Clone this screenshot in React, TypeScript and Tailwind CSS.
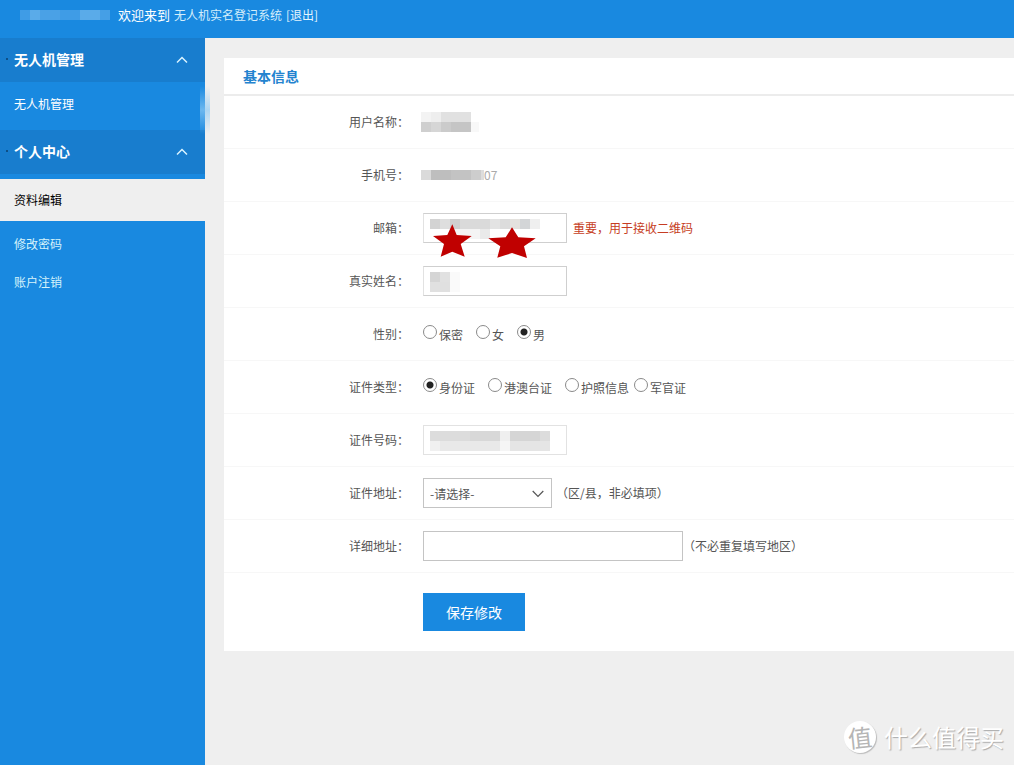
import { useState } from "react";
import type { ReactNode } from "react";

type Block = [x: number, y: number, w: number, h: number, fill: string];

function Mosaic({ width, height, blocks, className = "" }: { width: number; height: number; blocks: Block[]; className?: string }) {
  return (
    <svg width={width} height={height} className={`shrink-0 ${className}`} aria-hidden="true" shapeRendering="crispEdges">
      {blocks.map(([x, y, w, h, fill], i) => (
        <rect key={i} x={x} y={y} width={w} height={h} fill={fill} />
      ))}
    </svg>
  );
}

const accountMask: Block[] = [
  [0, 0, 90, 10, "#3f9ce6"],
  [10, 0, 10, 10, "#5aabe9"],
  [20, 0, 20, 10, "#4aa1e6"],
  [60, 0, 20, 10, "#5aabe9"],
  [80, 0, 10, 10, "#459fe6"],
];
const nameMask: Block[] = [
  [0, 0, 10, 10, "#f3f3f3"],
  [10, 0, 10, 10, "#eeeeee"],
  [20, 0, 30, 10, "#e1e1e1"],
  [0, 10, 10, 10, "#cfcfcf"],
  [10, 10, 10, 10, "#d6d6d6"],
  [20, 10, 10, 10, "#cbcbcb"],
  [30, 10, 20, 10, "#c5c5c5"],
  [50, 10, 8, 10, "#f8f8f8"],
];
const phoneMask: Block[] = [
  [0, 0, 10, 10, "#dadada"],
  [10, 0, 20, 10, "#bebebe"],
  [30, 0, 20, 10, "#c3c3c3"],
  [50, 0, 10, 10, "#cdcdcd"],
  [60, 0, 3, 10, "#dddddd"],
];
const emailMask: Block[] = [
  [0, 0, 10, 10, "#d3d3d3"],
  [10, 0, 10, 10, "#dedede"],
  [20, 0, 10, 10, "#cfcfcf"],
  [30, 0, 30, 10, "#dadada"],
  [60, 0, 10, 10, "#e3e3e3"],
  [70, 0, 10, 10, "#dcdcdc"],
  [80, 0, 10, 10, "#e4e2de"],
  [90, 0, 10, 10, "#d3d5d7"],
  [100, 0, 10, 10, "#efefef"],
  [20, 10, 30, 10, "#f4f4f4"],
  [50, 10, 10, 10, "#eaeaea"],
];
const realNameMask: Block[] = [
  [0, 0, 10, 10, "#d5d5d5"],
  [10, 0, 10, 10, "#e1e1e1"],
  [0, 10, 20, 10, "#e0e0e0"],
  [20, 0, 10, 20, "#fafafa"],
];
const idMask: Block[] = [
  [0, 0, 40, 10, "#dcdcdc"],
  [40, 0, 30, 10, "#d8d8d8"],
  [70, 0, 10, 10, "#efefef"],
  [80, 0, 30, 10, "#d5d5d5"],
  [110, 0, 10, 10, "#dcdcdc"],
  [0, 10, 10, 10, "#f0f0f0"],
  [10, 10, 60, 10, "#e9e9e9"],
  [70, 10, 10, 10, "#f5f5f5"],
  [80, 10, 40, 10, "#e5e5e5"],
];

function GroupButton({ children, open, onClick }: { children: ReactNode; open: boolean; onClick: () => void }) {
  return (
    <button type="button" aria-expanded={open} onClick={onClick} className="flex h-11 w-full items-center justify-between bg-[#187dce] pr-[17px] pl-1.5 text-sm font-bold">
      <span className="flex items-center gap-1.5 pb-0.5">
        <span className="size-0.5 bg-[#0d4f86]" />
        {children}
      </span>
      <svg width="12" height="8" viewBox="0 0 12 8" fill="none" stroke="#d9f3ff" strokeWidth="1.5" aria-hidden="true">
        <path d={open ? "M1 6.5 6 1.5l5 5" : "M1 1.5 6 6.5l5-5"} />
      </svg>
    </button>
  );
}

function Row({ label, id, children }: { label: string; id?: string; children: ReactNode }) {
  return (
    <div className="flex h-[53px] items-center gap-3.5 border-b border-[#f7f7f7]">
      {id ? (
        <label htmlFor={id} className="w-[185px] shrink-0 text-right">{label}</label>
      ) : (
        <span className="w-[185px] shrink-0 text-right">{label}</span>
      )}
      <div className="flex items-center">{children}</div>
    </div>
  );
}

function RadioSet({ name, options, initial, gaps }: { name: string; options: string[]; initial: string; gaps: string }) {
  const [value, setValue] = useState(initial);
  return (
    <div className={`flex ${gaps}`} role="radiogroup" aria-label={name}>
      {options.map((option) => (
        <label key={option} className="flex items-start gap-0.5">
          <input
            type="radio"
            name={name}
            checked={value === option}
            onChange={() => setValue(option)}
            className="size-3.5 appearance-none rounded-full border border-[#8a8a8a] bg-white checked:bg-[radial-gradient(circle,#222_3px,#fff_4px)]"
          />
          <span className="pt-0.5 leading-4">{option}</span>
        </label>
      ))}
    </div>
  );
}

const fieldClass = "h-[30px] border bg-white px-1.5 outline-none";

function MaskedField({ id, blocks, soft = false, children }: { id: string; blocks: Block[]; soft?: boolean; children?: ReactNode }) {
  return (
    <div className="relative">
      <input id={id} type="text" className={`block w-36 ${fieldClass} ${soft ? "border-[#e2e2e2]" : "border-[#cfcfcf] border-l-[#e2e2e2]"}`} />
      <Mosaic width={120} height={20} blocks={blocks} className="pointer-events-none absolute top-1.5 left-[7px]" />
      {children}
    </div>
  );
}

export default function App() {
  const [droneOpen, setDroneOpen] = useState(true);
  const [centerOpen, setCenterOpen] = useState(true);

  return (
    <div lang="zh-CN" className="relative flex min-h-screen flex-col bg-[#efefef] font-['Noto_Sans_CJK_SC',sans-serif] text-xs text-[#555]">
      <header className="flex h-[38px] items-center bg-[#1989e0] pb-2 pl-5 text-[#d3edfb]">
        <Mosaic width={90} height={10} blocks={accountMask} />
        <span className="ml-2 text-[13px] text-white">欢迎来到</span>
        <span className="ml-1">无人机实名登记系统</span>
        <a href="#logout" className="ml-1 text-[#e4f4fd]">[退出]</a>
      </header>

      <div className="flex flex-1">
        <aside className="relative w-[205px] shrink-0 bg-[#1989e0] text-white">
          <nav>
            <GroupButton open={droneOpen} onClick={() => setDroneOpen(!droneOpen)}>无人机管理</GroupButton>
            {droneOpen && <a href="#drones" className="flex h-12 items-center pb-1 pl-3.5">无人机管理</a>}
            <GroupButton open={centerOpen} onClick={() => setCenterOpen(!centerOpen)}>个人中心</GroupButton>
            {centerOpen && (
              <div className="pt-[5px]">
                <a href="#profile" aria-current="page" className="flex h-[42px] items-center bg-[#efefef] pl-3.5 text-black">资料编辑</a>
                <div className="pt-1 text-[#d6f3fb]">
                  <a href="#password" className="flex h-[38px] items-center pl-3.5">修改密码</a>
                  <a href="#cancel" className="flex h-[38px] items-center pl-3.5">账户注销</a>
                </div>
              </div>
            )}
          </nav>
          <svg className="pointer-events-none absolute top-12 -right-1.5" width="12" height="48" aria-hidden="true">
            <defs>
              <linearGradient id="edge" x1="0" y1="0" x2="0" y2="1">
                <stop offset="0" stopColor="#8fcbf5" stopOpacity="0" />
                <stop offset=".5" stopColor="#8fcbf5" stopOpacity=".7" />
                <stop offset="1" stopColor="#8fcbf5" stopOpacity="0" />
              </linearGradient>
            </defs>
            <rect x="1" width="10" height="48" fill="url(#edge)" />
          </svg>
        </aside>

        <main className="min-w-0 flex-1 pt-5 pl-[19px]">
          <form className="bg-white pb-5" onSubmit={(e) => e.preventDefault()}>
            <h1 className="flex h-[38px] items-center border-b-2 border-[#ececec] pl-[19px] text-sm font-bold text-[#2383cf]">基本信息</h1>
            <Row label="用户名称：">
              <Mosaic width={58} height={20} blocks={nameMask} className="-ml-0.5" />
            </Row>
            <Row label="手机号：">
              <Mosaic width={63} height={10} blocks={phoneMask} className="-ml-0.5" />
              <span className="text-[#aaa]">07</span>
            </Row>
            <Row label="邮箱：" id="email">
              <MaskedField id="email" blocks={emailMask}>
                <svg className="pointer-events-none absolute top-2.5 left-2.5" width="104" height="36" fill="#c00000" aria-hidden="true">
                  <path d="M19.3 1.3 23.7 12l15 1-11 8 4 12.700-12.400-5-11.600 5L11 21 0 13l14.300-1Z" />
                  <path d="M79 4.300 85.300 14.300l17.400 1L91 23.300 94 35l-15-5-14.700 4.700 3-11.400-12-8 17.400-1Z" />
                </svg>
              </MaskedField>
              <span className="ml-1.5 text-[#c63d23]">重要，用于接收二维码</span>
            </Row>
            <Row label="真实姓名：" id="realname">
              <MaskedField id="realname" blocks={realNameMask} />
            </Row>
            <Row label="性别：">
              <RadioSet name="性别" options={["保密", "女", "男"]} initial="男" gaps="gap-[13px]" />
            </Row>
            <Row label="证件类型：">
              <RadioSet name="证件类型" options={["身份证", "港澳台证", "护照信息", "军官证"]} initial="身份证" gaps="gap-[13px] [&>:last-child]:-ml-2" />
            </Row>
            <Row label="证件号码：" id="idnumber">
              <MaskedField id="idnumber" blocks={idMask} soft />
            </Row>
            <Row label="证件地址：" id="region">
              <div className="relative">
                <select id="region" className={`block w-[129px] appearance-none border-[#c4c4c4] pt-0.5 ${fieldClass}`}>
                  <option>-请选择-</option>
                </select>
                <svg className="pointer-events-none absolute top-3 right-2" width="12" height="8" fill="none" stroke="#555" strokeWidth="1.2" aria-hidden="true">
                  <path d="m.7 1 5.300 5.300L11.300 1" />
                </svg>
              </div>
              <span className="ml-1">（区/县，非必填项）</span>
            </Row>
            <Row label="详细地址：" id="address">
              <input id="address" type="text" className={`w-[260px] border-[#c4c4c4] ${fieldClass}`} />
              <span>（不必重复填写地区）</span>
            </Row>
            <div className="pt-5 pl-[199px]">
              <button type="submit" className="h-[38px] w-[102px] bg-[#1989e0] text-sm text-white">保存修改</button>
            </div>
          </form>
        </main>
      </div>

      <div className="pointer-events-none absolute right-2.5 bottom-2.5 flex items-center gap-2 text-white">
        <span className="flex size-8 items-center justify-center rounded-full bg-white shadow-[1px_1px_1px_#bbb]">
          <span className="-rotate-6 text-2xl leading-none text-[#b5b5b5]">值</span>
        </span>
        <span className="text-2xl leading-9 [text-shadow:1px_1px_1px_#aaa]">什么值得买</span>
      </div>
    </div>
  );
}
